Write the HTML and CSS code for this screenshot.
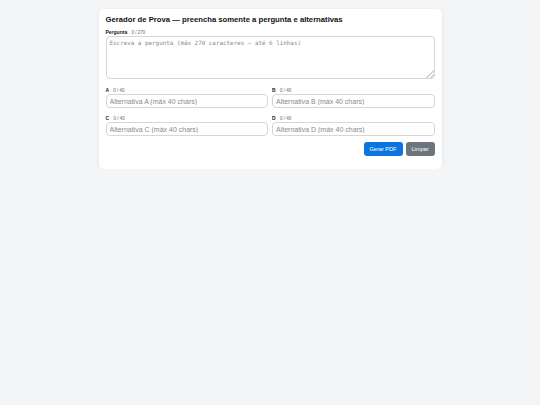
FILE: index.html
```html
<!DOCTYPE html>
<html lang="pt">
<head>
<meta charset="utf-8">
<title>Gerador de Prova</title>
<link rel="stylesheet" href="styles.css">
</head>
<body>
<main class="card">
  <h1 class="title">Gerador de Prova — preencha somente a pergunta e alternativas</h1>
  <div class="field">
    <label class="label">Pergunta <span class="count">0 / 270</span></label>
    <textarea class="question" placeholder="Escreva a pergunta (máx 270 caracteres — até 6 linhas)"></textarea>
  </div>
  <div class="grid">
    <div class="field">
      <label class="label">A <span class="count">0 / 40</span></label>
      <input class="alt" type="text" placeholder="Alternativa A (máx 40 chars)">
    </div>
    <div class="field">
      <label class="label">B <span class="count">0 / 40</span></label>
      <input class="alt" type="text" placeholder="Alternativa B (máx 40 chars)">
    </div>
    <div class="field">
      <label class="label">C <span class="count">0 / 40</span></label>
      <input class="alt" type="text" placeholder="Alternativa C (máx 40 chars)">
    </div>
    <div class="field">
      <label class="label">D <span class="count">0 / 40</span></label>
      <input class="alt" type="text" placeholder="Alternativa D (máx 40 chars)">
    </div>
  </div>
  <div class="actions">
    <button class="btn btn-primary" type="button">Gerar PDF</button>
    <button class="btn btn-secondary" type="button">Limpar</button>
  </div>
</main>
</body>
</html>
```

FILE: styles.css
```css
html, body {
  margin: 0;
  padding: 0;
  background: #f4f5f7;
  font-family: "Liberation Sans", Arial, sans-serif;
}
body {
  padding-top: 9px;
}
.card {
  width: 343px;
  box-sizing: border-box;
  margin: 0 auto;
  background: #fff;
  border-radius: 5px;
  box-shadow: 0 1px 5px rgba(0,0,0,0.07);
  padding: 6px 7px 13px 7px;
}
.title {
  font-size: 7.7px;
  font-weight: bold;
  margin: 0 0 5px 0;
  color: #111;
  line-height: 9px;
}
.field {
  display: flex;
  flex-direction: column;
}
.label {
  display: block;
  height: 6px;
  font-size: 5px;
  font-weight: bold;
  color: #222;
  line-height: 6px;
  margin-bottom: 1px;
  white-space: nowrap;
}
.count {
  font-weight: normal;
  color: #666;
  font-size: 4.5px;
  line-height: 6px;
  margin-left: 3px;
}
.question {
  box-sizing: border-box;
  height: 43px;
  width: 100%;
  border: 1px solid #d3d6db;
  border-radius: 4px;
  padding: 3px 3px;
  font-family: "DejaVu Sans Mono", monospace;
  font-size: 5.9px;
  line-height: 7px;
  resize: vertical;
  margin: 0;
}
.question::-webkit-resizer {
  background: linear-gradient(135deg, transparent 72%, #cfcfcf 72%, #cfcfcf 78%, transparent 78%, transparent 86%, #cfcfcf 86%, #cfcfcf 92%, transparent 92%);
}
.question::placeholder, .alt::placeholder {
  color: #8a8a8a;
}
.grid {
  display: grid;
  grid-template-columns: 1fr 1fr;
  column-gap: 4px;
  row-gap: 7px;
  margin-top: 8px;
}
.alt {
  box-sizing: border-box;
  height: 14px;
  width: 100%;
  border: 1px solid #d3d6db;
  border-radius: 4px;
  padding: 0 3px;
  font-family: "Liberation Sans", Arial, sans-serif;
  font-size: 7px;
  margin: 0;
}
.actions {
  display: flex;
  justify-content: flex-end;
  gap: 3px;
  margin-top: 6px;
}
.btn {
  height: 14px;
  border: none;
  border-radius: 3px;
  color: #fff;
  font-family: "Liberation Sans", Arial, sans-serif;
  font-size: 5.6px;
  padding: 0;
}
.btn-primary { background: #0b74de; width: 39px; }
.btn-secondary { background: #6c757d; width: 29px; }
```
